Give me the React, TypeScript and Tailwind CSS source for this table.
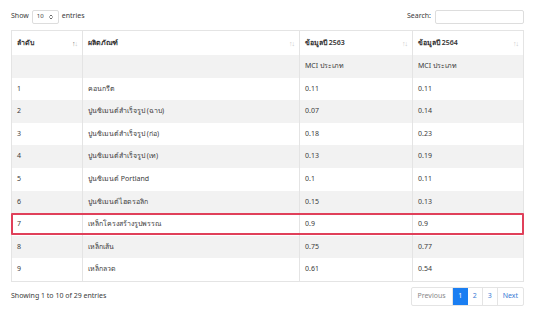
import { ChevronsUpDown } from 'lucide-react';

const rows = [
    ['1', 'คอนกรีต', '0.11', '0.11'],
    ['2', 'ปูนซิเมนต์สำเร็จรูป (ฉาบ)', '0.07', '0.14'],
    ['3', 'ปูนซิเมนต์สำเร็จรูป (ก่อ)', '0.18', '0.23'],
    ['4', 'ปูนซิเมนต์สำเร็จรูป (เท)', '0.13', '0.19'],
    ['5', 'ปูนซิเมนต์ Portland', '0.1', '0.11'],
    ['6', 'ปูนซิเมนต์ไฮดรอลิก', '0.15', '0.13'],
    ['7', 'เหล็กโครงสร้างรูปพรรณ', '0.9', '0.9'],
    ['8', 'เหล็กเส้น', '0.75', '0.77'],
    ['9', 'เหล็กลวด', '0.61', '0.54'],
];

function SortIcon({ active }: { active?: boolean }) {
    return (
        <span className="text-[7px] leading-none tracking-[-1px] text-[#c8c8c8]">
            <span className={active ? 'text-[#777]' : ''}>↑</span>↓
        </span>
    );
}

export default function App() {
    const cols = 'grid grid-cols-[70px_217px_113px_1fr]';
    return (
        <div className="w-[540px] h-[315px] bg-white text-[#3a3a3a] text-[7px] px-[11px] pt-[9px]" style={{ fontFamily: '"Noto Sans", "Liberation Sans", sans-serif' }}>
            <div className="w-[513px] flex justify-between items-center h-[15px]">
                <div className="flex items-center gap-[3px]">
                    <span>Show</span>
                    <div className="w-[27px] h-[14px] border border-[#ddd] rounded-[2px] flex items-center justify-between px-[4px] text-[6px]">
                        <span>10</span>
                        <ChevronsUpDown size={6} strokeWidth={3} />
                    </div>
                    <span>entries</span>
                </div>
                <div className="flex items-center gap-[4px]">
                    <span>Search:</span>
                    <div className="w-[89px] h-[14px] border border-[#ddd] rounded-[2px]" />
                </div>
            </div>

            <div className="mt-[6px] w-[513px] border border-[#e4e4e4] relative">
                <div className={`${cols} h-[24px] font-semibold text-[#333]`}>
                    {['ลำดับ', 'ผลิตภัณฑ์', 'ข้อมูลปี 2563', 'ข้อมูลปี 2564'].map((h, i) => (
                        <div key={h} className={`flex items-center justify-between px-[5px] ${i > 0 ? 'border-l border-[#e4e4e4]' : ''}`}>
                            <span>{h}</span>
                            <SortIcon active={i === 0} />
                        </div>
                    ))}
                </div>
                <div className={`${cols} h-[22.6px] bg-[#f2f2f2]`}>
                    <div />
                    <div className="border-l border-[#e4e4e4]" />
                    <div className="border-l border-[#e4e4e4] flex items-center px-[5px]">MCI ประเภท</div>
                    <div className="border-l border-[#e4e4e4] flex items-center px-[5px]">MCI ประเภท</div>
                </div>
                {rows.map((r, idx) => (
                    <div key={r[0]} className={`${cols} h-[22.6px] ${idx % 2 === 1 ? 'bg-[#f2f2f2]' : 'bg-white'}`}>
                        {r.map((c, i) => (
                            <div key={i} className={`flex items-center px-[5px] ${i > 0 ? 'border-l border-[#e4e4e4]' : ''}`}>{c}</div>
                        ))}
                    </div>
                ))}
                <div className="absolute left-[-1px] right-[-1px] top-[182px] h-[22px] border-2 border-[#e0405a] rounded-[1px] pointer-events-none" />
            </div>

            <div className="w-[513px] flex justify-between items-center mt-[5px]">
                <span>Showing 1 to 10 of 29 entries</span>
                <div className="flex h-[19px] border border-[#e4e4e4] rounded-[2px] text-[#3a7bd5]">
                    <div className="px-[6px] flex items-center text-[#888] border-r border-[#e4e4e4]">Previous</div>
                    <div className="w-[15px] flex items-center justify-center bg-[#1a7ef2] text-white">1</div>
                    <div className="w-[15px] flex items-center justify-center border-r border-[#e4e4e4]">2</div>
                    <div className="w-[15px] flex items-center justify-center border-r border-[#e4e4e4]">3</div>
                    <div className="px-[5px] flex items-center">Next</div>
                </div>
            </div>
        </div>
    );
}
